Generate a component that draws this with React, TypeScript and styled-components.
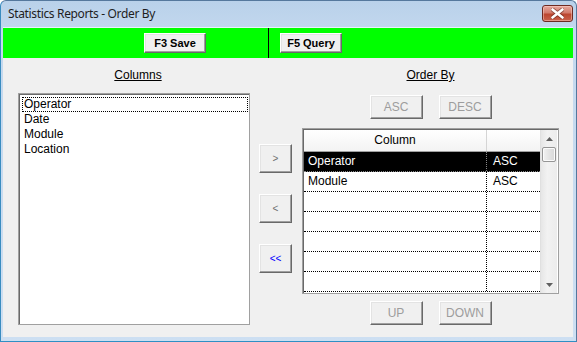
import React from 'react';
import styled, { createGlobalStyle } from 'styled-components';

const GlobalStyle = createGlobalStyle`
  html, body {
    margin: 0;
    padding: 0;
    background: #ffffff;
  }
  * {
    box-sizing: border-box;
  }
`;

const sourceColumns = ['Operator', 'Date', 'Module', 'Location'];

const orderRows = [
  { column: 'Operator', dir: 'ASC', selected: true },
  { column: 'Module', dir: 'ASC', selected: false },
  { column: '', dir: '', selected: false },
  { column: '', dir: '', selected: false },
  { column: '', dir: '', selected: false },
  { column: '', dir: '', selected: false },
  { column: '', dir: '', selected: false },
];

const Window = styled.div`
  width: 577px;
  height: 342px;
  display: flex;
  flex-direction: column;
  padding: 0 3px 4px 2px;
  border: 1px solid #55789d;
  border-bottom-color: #2f8fc4;
  border-left-color: #3a8cc0;
  border-radius: 6px 6px 0 0;
  background: linear-gradient(#b9d1ea 0px, #c3d8ee 30px, #cddff2 100%);
  font-family: 'Liberation Sans', Arial, sans-serif;
  overflow: hidden;
`;

const TitleBar = styled.div`
  height: 26px;
  flex: 0 0 26px;
  display: flex;
  align-items: flex-start;
  justify-content: space-between;
  padding-left: 5px;
`;

const TitleText = styled.span`
  margin-top: 5px;
  font-family: 'Segoe UI', 'Noto Sans', sans-serif;
  font-size: 12px;
  line-height: 16px;
  color: #1e1e1e;
  letter-spacing: -0.35px;
`;

const CloseButton = styled.div`
  margin-top: 4px;
  width: 31px;
  height: 17px;
  border: 1px solid #6e2a22;
  border-radius: 3px;
  background: linear-gradient(#e7a89e 0%, #d27b6c 45%, #bc4630 55%, #c9624d 100%);
  box-shadow: inset 0 0 0 1px rgba(255, 220, 210, 0.45);
  display: flex;
  align-items: center;
  justify-content: center;
`;

const Client = styled.div`
  flex: 1;
  display: flex;
  flex-direction: column;
  background: #f0f0f0;
`;

const Toolbar = styled.div`
  height: 31px;
  flex: 0 0 31px;
  display: flex;
  background: #00ff00;
  border-top: 1px solid #e8f2fb;
`;

const ToolbarCell = styled.div<{ $side: 'left' | 'right' }>`
  display: flex;
  align-items: center;
  width: ${(p) => (p.$side === 'left' ? '266px' : 'auto')};
  flex: ${(p) => (p.$side === 'left' ? '0 0 266px' : '1')};
  justify-content: ${(p) => (p.$side === 'left' ? 'flex-end' : 'flex-start')};
  padding: ${(p) => (p.$side === 'left' ? '0 62px 0 0' : '0 0 0 11px')};
  border-right: ${(p) => (p.$side === 'left' ? '1px solid #000' : 'none')};
`;

const Button = styled.button<{ $w: number; $h: number; $tone?: 'normal' | 'disabled' | 'blue' | 'arrow' }>`
  width: ${(p) => p.$w}px;
  height: ${(p) => p.$h}px;
  padding: 0;
  margin: 0;
  background: #f0f0f0;
  border: 1px solid;
  border-color: #ffffff #696969 #696969 #ffffff;
  box-shadow: inset -1px -1px 0 #a0a0a0, inset 1px 1px 0 #e3e3e3;
  font-family: 'Liberation Sans', Arial, sans-serif;
  font-size: ${(p) => (p.$tone === 'arrow' || p.$tone === 'blue' ? '10px' : '12px')};
  color: ${(p) =>
    p.$tone === 'disabled' ? '#9d9d9d' : p.$tone === 'blue' ? '#0000ff' : p.$tone === 'arrow' ? '#6f6f6f' : '#000'};
  display: flex;
  align-items: center;
  justify-content: center;
  cursor: default;
`;

const BoldButton = styled(Button)`
  font-weight: bold;
  font-size: 11px;
`;

const Body = styled.div`
  flex: 1;
  display: flex;
  padding: 10px 0 0 15px;
`;

const LeftColumn = styled.div`
  width: 232px;
  display: flex;
  flex-direction: column;
`;

const SectionLabel = styled.div<{ $shift?: number }>`
  height: 14px;
  font-size: 12px;
  line-height: 14px;
  text-align: center;
  text-decoration: underline;
  color: #000;
  padding-left: ${(p) => p.$shift ?? 0}px;
`;

const ListBox = styled.div`
  margin-top: 11px;
  height: 232px;
  background: #fff;
  border: 1px solid #a0a0a0;
  box-shadow: inset 1px 1px 0 #696969;
  padding: 3px 1px 0 3px;
`;

const ListItem = styled.div<{ $focused?: boolean }>`
  height: 15px;
  font-size: 12px;
  line-height: 13px;
  padding-left: 1px;
  color: #000;
  border: 1px dotted ${(p) => (p.$focused ? '#000' : 'transparent')};
`;

const MiddleColumn = styled.div`
  width: 33px;
  margin-left: 9px;
  padding-top: 76px;
  display: flex;
  flex-direction: column;
  gap: 21px;
`;

const RightColumn = styled.div`
  width: 257px;
  margin-left: 10px;
  display: flex;
  flex-direction: column;
  align-items: center;
`;

const ButtonPair = styled.div<{ $top: number }>`
  margin-top: ${(p) => p.$top}px;
  display: flex;
  gap: 16px;
`;

const Grid = styled.div`
  margin-top: 9px;
  width: 257px;
  height: 166px;
  display: flex;
  background: #fff;
  border: 1px solid #a0a0a0;
  box-shadow: inset 1px 1px 0 #696969;
  padding: 1px 0 0 1px;
`;

const GridTable = styled.div`
  width: 236px;
  display: flex;
  flex-direction: column;
`;

const HeaderRow = styled.div`
  height: 22px;
  display: grid;
  grid-template-columns: 183px 53px;
  background: linear-gradient(#ffffff, #f3f3f3);
  border-bottom: 1px solid #a0a0a0;
`;

const HeaderCell = styled.div<{ $last?: boolean }>`
  font-size: 12px;
  line-height: 21px;
  text-align: center;
  color: #000;
  border-right: ${(p) => (p.$last ? 'none' : '1px solid #d5d5d5')};
`;

const DataRow = styled.div<{ $selected?: boolean }>`
  height: 20px;
  display: grid;
  grid-template-columns: 183px 53px;
  background: ${(p) => (p.$selected ? '#000' : '#fff')};
  color: ${(p) => (p.$selected ? '#fff' : '#000')};
  border-bottom: 1px dotted ${(p) => (p.$selected ? '#888' : '#000')};
`;

const DataCell = styled.div<{ $first?: boolean; $selected?: boolean }>`
  font-size: 12px;
  line-height: 19px;
  padding-left: ${(p) => (p.$first ? 4 : 6)}px;
  border-right: ${(p) => (p.$first ? `1px dotted ${p.$selected ? '#888' : '#000'}` : 'none')};
  white-space: nowrap;
`;

const ScrollBar = styled.div`
  width: 17px;
  display: flex;
  flex-direction: column;
  background: linear-gradient(90deg, #e6e6e6, #f2f2f2 40%, #ececec);
  border-left: 1px solid #e0e0e0;
`;

const ScrollArrow = styled.div`
  height: 17px;
  display: flex;
  align-items: center;
  justify-content: center;
`;

const ScrollThumb = styled.div`
  margin: 0 1px;
  height: 15px;
  border: 1px solid #959595;
  border-radius: 2px;
  background: linear-gradient(90deg, #f2f2f2, #e4e4e4 50%, #d8d8d8);
  box-shadow: inset 0 0 0 1px #fbfbfb;
`;

const ScrollTrack = styled.div`
  flex: 1;
`;

const Arrow = ({ down }: { down?: boolean }) => (
  <svg width="7" height="4" viewBox="0 0 7 4">
    <path d={down ? 'M0 0 H7 L3.5 4 Z' : 'M0 4 H7 L3.5 0 Z'} fill="#606060" />
  </svg>
);

const CloseGlyph = () => (
  <svg width="13" height="11" viewBox="0 0 13 11">
    <path
      d="M1.5 1.5 L11.5 9.5 M11.5 1.5 L1.5 9.5"
      stroke="#5a1e16"
      strokeWidth="4.2"
      strokeLinecap="round"
      opacity="0.55"
    />
    <path d="M1.5 1.5 L11.5 9.5 M11.5 1.5 L1.5 9.5" stroke="#fff" strokeWidth="2.6" strokeLinecap="round" />
  </svg>
);

export default function App() {
  return (
    <>
      <GlobalStyle />
      <Window>
        <TitleBar>
          <TitleText>Statistics Reports - Order By</TitleText>
          <CloseButton>
            <CloseGlyph />
          </CloseButton>
        </TitleBar>
        <Client>
          <Toolbar>
            <ToolbarCell $side="left">
              <BoldButton $w={62} $h={20}>F3 Save</BoldButton>
            </ToolbarCell>
            <ToolbarCell $side="right">
              <BoldButton $w={62} $h={20}>F5 Query</BoldButton>
            </ToolbarCell>
          </Toolbar>
          <Body>
            <LeftColumn>
              <SectionLabel $shift={8}>Columns</SectionLabel>
              <ListBox>
                {sourceColumns.map((name, i) => (
                  <ListItem key={name} $focused={i === 0}>
                    {name}
                  </ListItem>
                ))}
              </ListBox>
            </LeftColumn>
            <MiddleColumn>
              <Button $w={33} $h={29} $tone="arrow">&gt;</Button>
              <Button $w={33} $h={29} $tone="arrow">&lt;</Button>
              <Button $w={33} $h={29} $tone="blue">&lt;&lt;</Button>
            </MiddleColumn>
            <RightColumn>
              <SectionLabel>Order By</SectionLabel>
              <ButtonPair $top={13}>
                <Button $w={53} $h={24} $tone="disabled">ASC</Button>
                <Button $w={53} $h={24} $tone="disabled">DESC</Button>
              </ButtonPair>
              <Grid>
                <GridTable>
                  <HeaderRow>
                    <HeaderCell>Column</HeaderCell>
                    <HeaderCell $last />
                  </HeaderRow>
                  {orderRows.map((row, i) => (
                    <DataRow key={i} $selected={row.selected}>
                      <DataCell $first $selected={row.selected}>{row.column}</DataCell>
                      <DataCell $selected={row.selected}>{row.dir}</DataCell>
                    </DataRow>
                  ))}
                </GridTable>
                <ScrollBar>
                  <ScrollArrow>
                    <Arrow />
                  </ScrollArrow>
                  <ScrollThumb />
                  <ScrollTrack />
                  <ScrollArrow>
                    <Arrow down />
                  </ScrollArrow>
                </ScrollBar>
              </Grid>
              <ButtonPair $top={7}>
                <Button $w={53} $h={24} $tone="disabled">UP</Button>
                <Button $w={53} $h={24} $tone="disabled">DOWN</Button>
              </ButtonPair>
            </RightColumn>
          </Body>
        </Client>
      </Window>
    </>
  );
}
